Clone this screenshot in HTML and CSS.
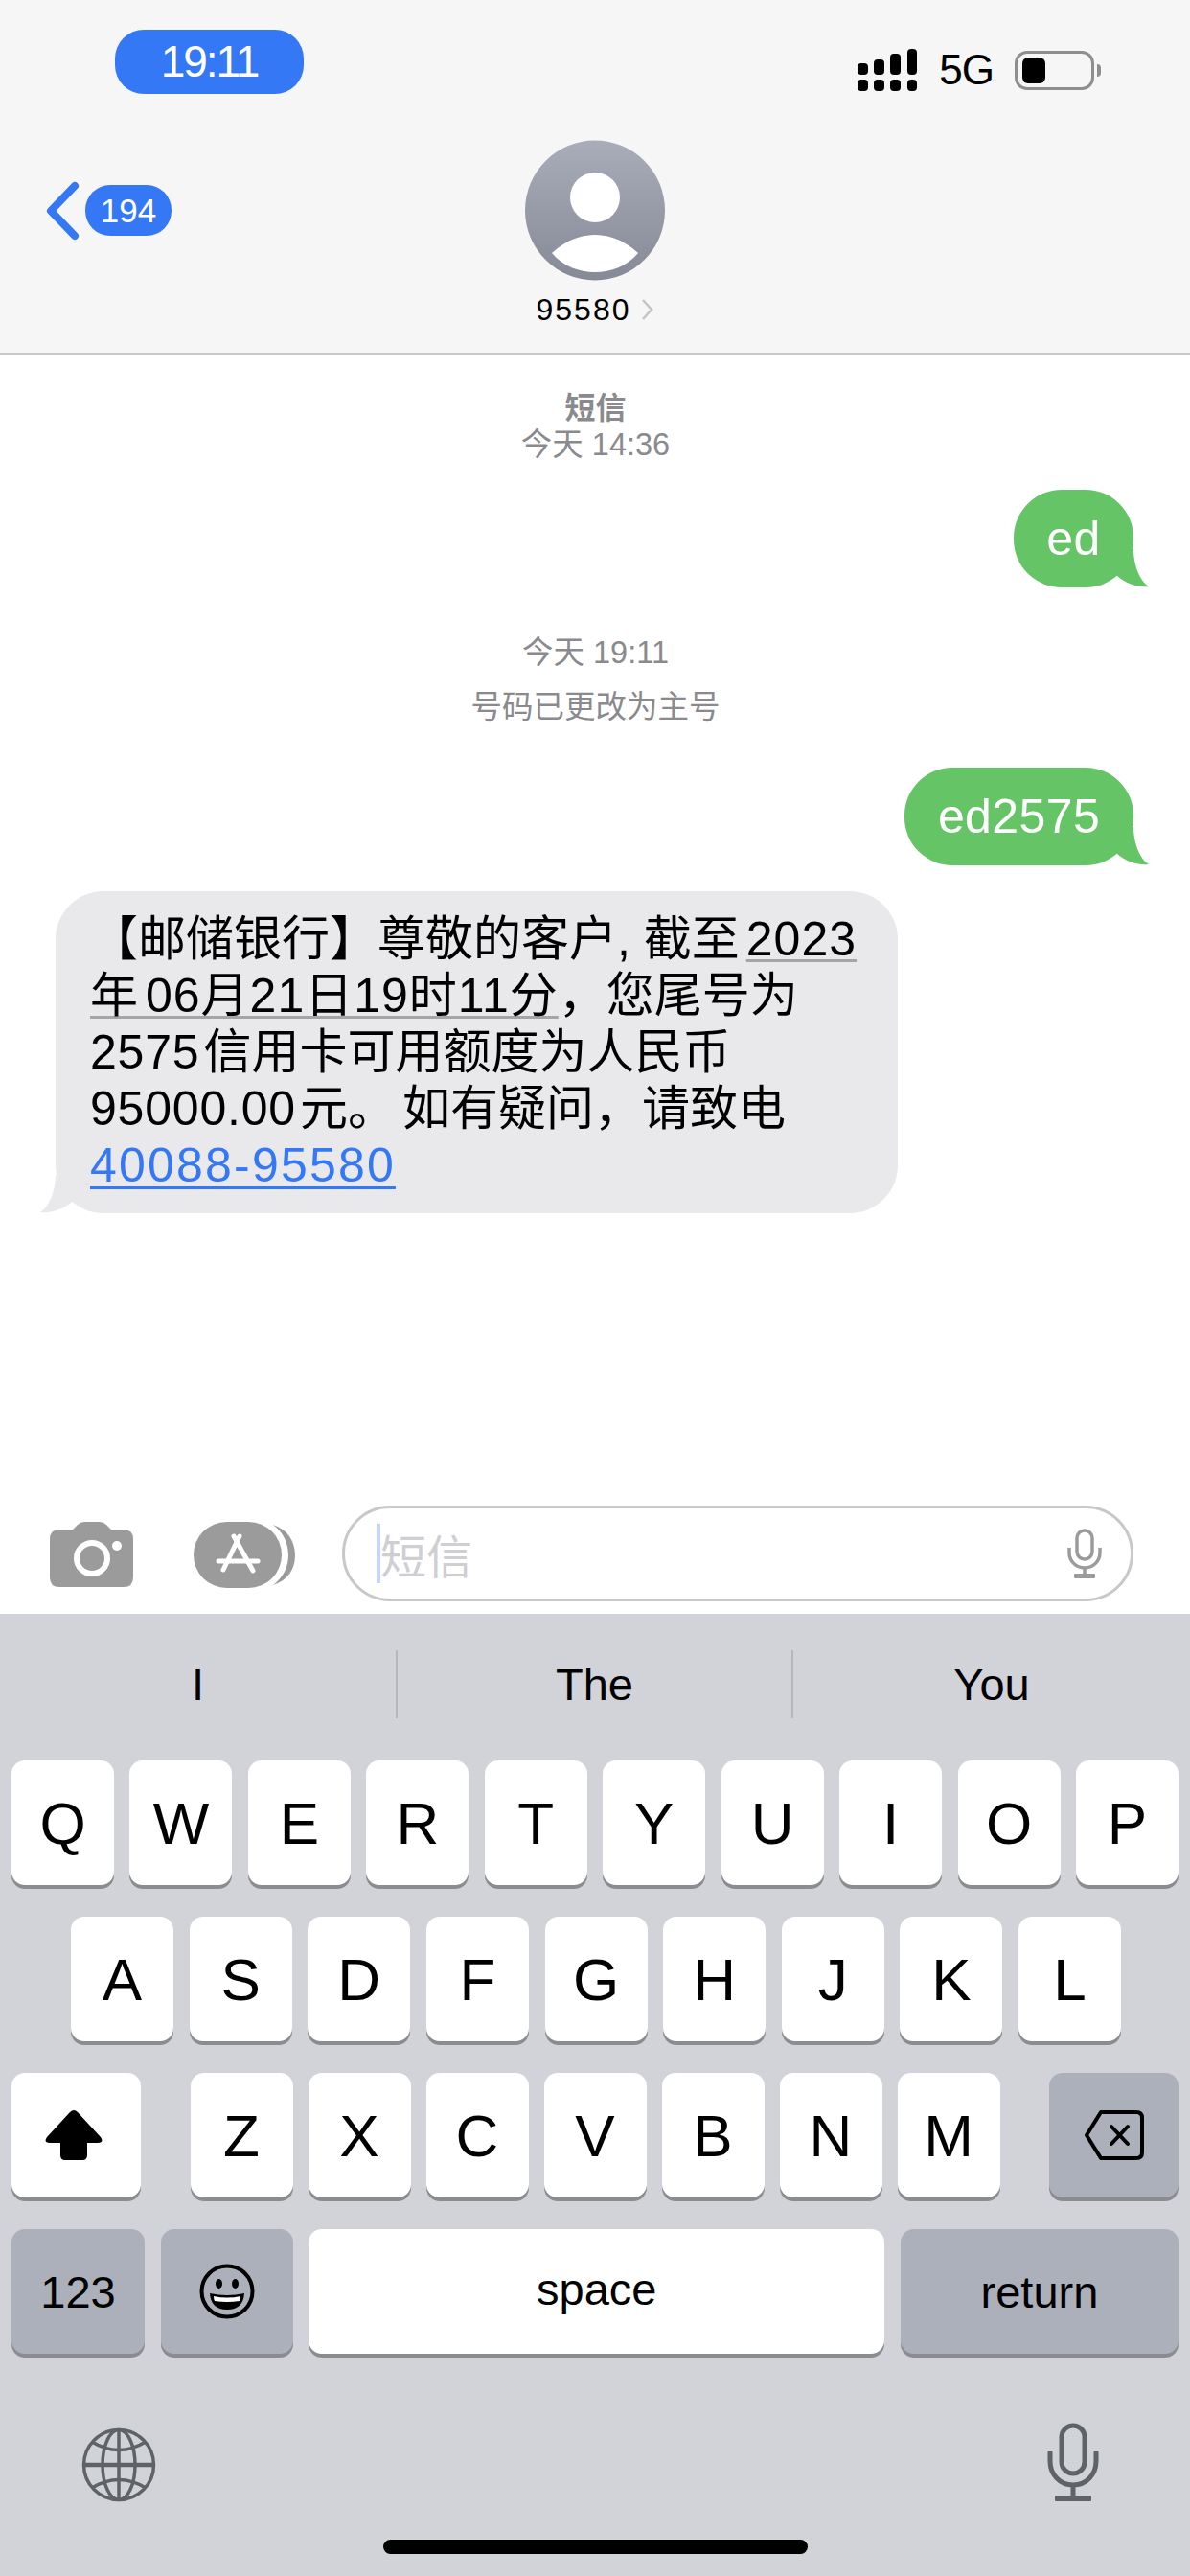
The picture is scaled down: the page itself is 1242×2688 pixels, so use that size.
FILE: index.html
```html
<!DOCTYPE html>
<html lang="zh-CN">

<head>
    <meta charset="UTF-8">
    <title>95580</title>
    <link rel="stylesheet" href="styles.css">
</head>

<body>
    <div class="phone">
        <header class="nav">
            <div class="status">
                <div class="time">19:11</div>
                <div class="status-right">
                    <svg class="signal" width="62" height="44" viewBox="0 0 62 44">
                        <rect x="0" y="15" width="11" height="12" rx="4" />
                        <rect x="17" y="11" width="11" height="16" rx="4" />
                        <rect x="34" y="5" width="11" height="22" rx="4" />
                        <rect x="52" y="0" width="10" height="27" rx="4" />
                        <rect x="0" y="32" width="11" height="12" rx="4" />
                        <rect x="17" y="32" width="11" height="12" rx="4" />
                        <rect x="34" y="32" width="11" height="12" rx="4" />
                        <rect x="52" y="32" width="10" height="12" rx="4" />
                    </svg>
                    <span class="net">5G</span>
                    <div class="battery">
                        <div class="battery-fill"></div>
                    </div>
                    <div class="battery-nub"></div>
                </div>
            </div>
            <div class="contact-row">
                <div class="back">
                    <svg width="36" height="62" viewBox="0 0 36 62">
                        <path d="M31 5 L6 31 L31 57" fill="none" stroke="#3478f6" stroke-width="8" stroke-linecap="round" stroke-linejoin="round" />
                    </svg>
                    <span class="badge">194</span>
                </div>
                <div class="contact">
                    <svg class="avatar" width="146" height="147" viewBox="0 0 146 147">
                        <defs>
                            <linearGradient id="avatarBg" x1="0" y1="0" x2="0" y2="1">
                                <stop offset="0" stop-color="#a9adb9" />
                                <stop offset="1" stop-color="#858a96" />
                            </linearGradient>
                        </defs>
                        <circle cx="73" cy="73.5" r="73" fill="url(#avatarBg)" />
                        <circle cx="73" cy="60" r="26" fill="#fff" />
                        <path d="M28 118 C42 105 58 99 73 99 C88 99 104 105 118 118 C106 132 90 138 73 138 C56 138 40 132 28 118 Z" fill="#fff" />
                    </svg>
                    <div class="contact-name">
                        <span>95580</span>
                        <svg width="13" height="22" viewBox="0 0 13 22">
                            <path d="M2 1 L11 11 L2 21" fill="none" stroke="#c4c4c6" stroke-width="2.5" />
                        </svg>
                    </div>
                </div>
            </div>
        </header>

        <main class="thread">
            <div class="meta meta-first">
                <div class="meta-title">短信</div>
                <div>今天 14:36</div>
            </div>
            <div class="bubble sent sent-first">
                ed
                <svg class="tail" width="60" height="50" viewBox="0 0 60 50">
                    <path d="M40 5 C40 20 46 38 56 44 C46 45 33 42 23 33 L10 10 Z" fill="#65c466" />
                </svg>
            </div>
            <div class="meta meta-second">
                <div>今天 19:11</div>
                <div class="meta-note">号码已更改为主号</div>
            </div>
            <div class="bubble sent sent-second">
                ed2575
                <svg class="tail" width="60" height="50" viewBox="0 0 60 50">
                    <path d="M40 5 C40 20 46 38 56 44 C46 45 33 42 23 33 L10 10 Z" fill="#65c466" />
                </svg>
            </div>
            <div class="bubble received">
                【邮储银行】尊敬的客户, 截至<span class="gap-wide"></span><span class="date-link">2023</span><br>
                <span class="date-link"><span class="year-char">年</span>06月21日19时11分</span>，您尾号为<br>
                <span class="num">2575</span><span class="gap"></span>信用卡可用额度为人民币<br>
                <span class="num">95000.00</span><span class="gap"></span>元。<span class="gap-wide"></span>如有疑问，请致电<br>
                <span class="phone-link">40088-95580</span>
                <svg class="tail" width="60" height="50" viewBox="0 0 60 50">
                    <path d="M40 5 C40 20 46 38 56 44 C46 45 33 42 23 33 L10 10 Z" fill="#e9e9eb" />
                </svg>
            </div>
        </main>

        <section class="composer">
            <svg class="camera" width="87" height="68" viewBox="0 0 87 68">
                <path fill="#9b9b9b" d="M10 8 H24 L29 3 Q32 0 36 0 H52 Q56 0 59 3 L64 8 H77 Q87 8 87 18 V58 Q87 68 77 68 H10 Q0 68 0 58 V18 Q0 8 10 8 Z" />
                <circle cx="44" cy="38" r="16" fill="none" stroke="#fff" stroke-width="6" />
                <circle cx="70" cy="25" r="5" fill="#fff" />
            </svg>
            <svg class="apps" width="106" height="69" viewBox="0 0 106 69">
                <rect width="92" height="69" rx="34.5" fill="#9b9b9b" />
                <path fill="#9b9b9b" d="M83 3 C98 8 106 20 106 35 C106 50 98 61 83 66 C94 58 99 46 99 35 C99 23 94 11 83 3 Z" />
                <g fill="none" stroke="#fff" stroke-width="5" stroke-linecap="round">
                    <path d="M48 15 L31 50" />
                    <path d="M42 15 L62 51" />
                    <path d="M26 41 H67" />
                </g>
            </svg>
            <div class="input">
                <span class="caret"></span>
                <span class="placeholder">短信</span>
                <svg class="input-mic" width="36" height="52" viewBox="0 0 36 52">
                    <g fill="none" stroke="#9b9b9b" stroke-width="3.5">
                        <rect x="10" y="2" width="16" height="30" rx="8" />
                        <path d="M2 20 V25 C2 34 9 41 18 41 C27 41 34 34 34 25 V20" />
                        <path d="M18 41 V50" />
                    </g>
                    <rect x="7" y="47" width="22" height="5" rx="1" fill="#9b9b9b" />
                </svg>
            </div>
        </section>

        <section class="keyboard">
            <div class="suggestions">
                <div class="suggestion">I</div>
                <div class="suggestion suggestion-sep">The</div>
                <div class="suggestion suggestion-sep">You</div>
            </div>

            <div class="key-row">
                <div class="key">Q</div>
                <div class="key">W</div>
                <div class="key">E</div>
                <div class="key">R</div>
                <div class="key">T</div>
                <div class="key">Y</div>
                <div class="key">U</div>
                <div class="key">I</div>
                <div class="key">O</div>
                <div class="key">P</div>
            </div>
            <div class="key-row key-row-inset">
                <div class="key">A</div>
                <div class="key">S</div>
                <div class="key">D</div>
                <div class="key">F</div>
                <div class="key">G</div>
                <div class="key">H</div>
                <div class="key">J</div>
                <div class="key">K</div>
                <div class="key">L</div>
            </div>
            <div class="key-row">
                <div class="key key-side">
                    <svg class="shift" width="60" height="52" viewBox="0 0 60 52">
                        <path d="M30 0 Q32 0 34 2 L58 28 Q62 34 55 34 H44 V47 Q44 52 39 52 H21 Q16 52 16 47 V34 H5 Q-2 34 2 28 L26 2 Q28 0 30 0 Z" />
                    </svg>
                </div>
                <div class="key-group">
                    <div class="key">Z</div>
                    <div class="key">X</div>
                    <div class="key">C</div>
                    <div class="key">V</div>
                    <div class="key">B</div>
                    <div class="key">N</div>
                    <div class="key">M</div>
                </div>
                <div class="key key-side key-dark">
                    <svg width="62" height="52" viewBox="0 0 62 52">
                        <path d="M17 2 H54 Q60 2 60 8 V44 Q60 50 54 50 H17 L2 26 Z" fill="none" stroke="#000" stroke-width="4" stroke-linejoin="round" />
                        <path d="M28 17 L45 35 M45 17 L28 35" fill="none" stroke="#000" stroke-width="4" stroke-linecap="round" />
                    </svg>
                </div>
            </div>
            <div class="key-row">
                <div class="key key-dark key-small key-num">123</div>
                <div class="key key-dark key-emoji">
                    <svg width="58" height="58" viewBox="0 0 58 58">
                        <circle cx="29" cy="29" r="26.5" fill="none" stroke="#000" stroke-width="4" />
                        <ellipse cx="20.5" cy="21" rx="3.5" ry="5" />
                        <ellipse cx="37.5" cy="21" rx="3.5" ry="5" />
                        <path d="M11 31 Q29 35 47 31 Q46 48 29 48 Q12 48 11 31 Z" />
                        <path d="M15 34 Q29 37 43 34 Q43 38 42 39 Q29 41 16 39 Q15 38 15 34 Z" fill="#fff" />
                    </svg>
                </div>
                <div class="key key-small key-space">space</div>
                <div class="key key-dark key-small key-return">return</div>
            </div>

            <div class="kb-bottom">
                <svg class="globe" width="78" height="78" viewBox="0 0 78 78">
                    <g fill="none" stroke="#5f6267" stroke-width="3.5">
                        <circle cx="39" cy="39" r="36.5" />
                        <ellipse cx="39" cy="39" rx="17" ry="36.5" />
                        <path d="M39 2 V76" />
                        <path d="M2 39 H76" stroke-width="4.5" />
                        <path d="M11 15 Q39 32 67 15" />
                        <path d="M11 63 Q39 46 67 63" />
                    </g>
                </svg>
                <svg width="54" height="82" viewBox="0 0 54 82">
                    <g fill="none" stroke="#5f6267" stroke-width="5">
                        <rect x="15" y="3" width="24" height="50" rx="12" />
                        <path d="M3 30 V40 C3 54 13 65 27 65 C41 65 51 54 51 40 V30" />
                        <path d="M27 65 V78" />
                    </g>
                    <rect x="8" y="76" width="38" height="6" rx="1" fill="#5f6267" />
                </svg>
            </div>
            <div class="home-bar"></div>
        </section>
    </div>
</body>

</html>
```

FILE: styles.css
```css
* {
    box-sizing: border-box;
}

body {
    margin: 0;
    background-color: #fff;
    font-family: "Liberation Sans", "Noto Sans CJK SC", sans-serif;
    color: #000;
}

.phone {
    width: 1242px;
    height: 2688px;
    display: flex;
    flex-direction: column;
    overflow: hidden;
}

/* top bar */
.nav {
    height: 370px;
    flex: none;
    background-color: #f6f6f6;
    border-bottom: 2px solid #c9c9c9;
}

.status {
    height: 146px;
    padding: 31px 93px 0 120px;
    display: flex;
    justify-content: space-between;
    align-items: flex-start;
}

.time {
    width: 197px;
    height: 67px;
    line-height: 67px;
    border-radius: 30px;
    background-color: #3478f6;
    color: #fff;
    font-size: 46px;
    letter-spacing: -2px;
    text-align: center;
}

.status-right {
    margin-top: 20px;
    display: flex;
    align-items: center;
}

.net {
    margin-left: 23px;
    font-size: 44px;
    line-height: 44px;
    letter-spacing: -1px;
}

.battery {
    margin-left: 22px;
    width: 83px;
    height: 41px;
    padding: 4px 5px;
    border: 3px solid #8e8e8e;
    border-radius: 13px;
}

.battery-fill {
    width: 24px;
    height: 100%;
    background-color: #000;
    border-radius: 6px;
}

.battery-nub {
    margin-left: 3px;
    width: 4px;
    height: 13px;
    background-color: #8e8e8e;
    border-radius: 0 4px 4px 0;
}

.contact-row {
    display: grid;
    grid-template-columns: 1fr 146px 1fr;
}

.back {
    height: 147px;
    padding-left: 47px;
    display: flex;
    align-items: center;
    gap: 6px;
}

.badge {
    width: 90px;
    height: 53px;
    line-height: 53px;
    border-radius: 26px;
    background-color: #3478f6;
    color: #fff;
    font-size: 35px;
    text-align: center;
}

.contact {
    display: flex;
    flex-direction: column;
    align-items: center;
}

.avatar {
    flex: none;
}

.contact-name {
    margin-top: 11px;
    display: flex;
    align-items: center;
    gap: 11px;
    font-size: 32px;
    line-height: 38px;
    letter-spacing: 2px;
    white-space: nowrap;
}

/* messages */
.thread {
    flex: 1;
    padding: 37px 59px 0 58px;
    display: flex;
    flex-direction: column;
}

.meta {
    font-size: 32.5px;
    line-height: 38px;
    color: #8a8a8e;
    text-align: center;
    margin-right: -2px;
}

.meta-title {
    font-weight: bold;
    font-size: 32px;
}

.meta-second {
    margin-top: 49px;
}

.meta-note {
    margin-top: 19px;
}

.bubble {
    position: relative;
    font-size: 50px;
    line-height: 59px;
    white-space: nowrap;
    border-radius: 50px;
}

.sent {
    align-self: flex-end;
    height: 102px;
    line-height: 102px;
    background-color: #65c466;
    color: #fff;
    text-align: center;
    letter-spacing: 0.4px;
}

.sent .tail {
    position: absolute;
    right: -20px;
    bottom: -5px;
}

.sent-first {
    margin-top: 28px;
    width: 125px;
}

.sent-second {
    margin-top: 44px;
    width: 239px;
}

.received {
    margin-top: 27px;
    width: 879px;
    height: 336px;
    padding: 21px 20px 20px 36px;
    background-color: #e9e9eb;
}

.received .tail {
    position: absolute;
    left: -20px;
    bottom: -5px;
    transform: scaleX(-1);
}

.gap {
    display: inline-block;
    width: 4px;
}

.gap-wide {
    display: inline-block;
    width: 7px;
}

.num {
    letter-spacing: 0.8px;
}

.date-link {
    letter-spacing: 1px;
    text-decoration: underline;
    text-decoration-color: #a5a5a7;
    text-decoration-thickness: 3px;
    text-underline-offset: 4px;
    text-decoration-skip-ink: none;
}

.year-char {
    letter-spacing: 8px;
}

.phone-link {
    color: #3478f6;
    letter-spacing: 2.2px;
    text-decoration: underline;
    text-decoration-thickness: 3px;
    text-underline-offset: 5px;
    text-decoration-skip-ink: none;
}

/* input row */
.composer {
    flex: none;
    height: 124px;
    padding: 11px 57px 0 52px;
    display: flex;
    align-items: flex-start;
}

.camera {
    margin-top: 17px;
    flex: none;
}

.apps {
    margin-top: 17px;
    margin-left: 63px;
    flex: none;
}

.input {
    margin-left: 49px;
    width: 826px;
    height: 100px;
    padding: 0 30px 0 33px;
    display: flex;
    align-items: center;
    border: 3px solid #c8c8c8;
    border-radius: 50px;
}

.caret {
    width: 4px;
    height: 62px;
    background-color: #c9d4fb;
    flex: none;
}

.placeholder {
    flex: 1;
    font-size: 48px;
    color: #cfcfd3;
}

/* keyboard */
.keyboard {
    flex: none;
    height: 1004px;
    padding: 0 12px;
    background-color: #d1d3d9;
}

.suggestions {
    margin: 0 -12px;
    height: 153px;
    padding: 38px 0 44px;
    display: grid;
    grid-template-columns: 413px 413px 416px;
}

.suggestion {
    font-size: 47px;
    line-height: 71px;
    text-align: center;
}

.suggestion-sep {
    border-left: 2px solid #b5b7bd;
}

.key-row {
    height: 130px;
    margin-bottom: 33px;
    display: flex;
    justify-content: space-between;
}

.key-row-inset {
    padding: 0 60px 0 62px;
}

.key {
    width: 107px;
    height: 130px;
    display: flex;
    align-items: center;
    justify-content: center;
    background-color: #fff;
    border-radius: 14px;
    box-shadow: 0 4px 0 #8b8c90;
    font-size: 62px;
}

.key-group {
    width: 845px;
    display: flex;
    justify-content: space-between;
}

.key-side {
    width: 135px;
}

.shift {
    margin-right: 5px;
}

.key-dark {
    background-color: #abb0bb;
}

.key-small {
    font-size: 47px;
}

.key-num {
    width: 139px;
}

.key-emoji {
    width: 138px;
}

.key-space {
    width: 601px;
    padding-bottom: 6px;
}

.key-return {
    width: 290px;
}

.kb-bottom {
    margin-top: 70px;
    height: 84px;
    padding: 2px 83px 0 73px;
    display: flex;
    justify-content: space-between;
    align-items: flex-start;
}

.globe {
    margin-top: 5px;
}

.home-bar {
    width: 443px;
    height: 15px;
    margin: 40px auto 0;
    background-color: #000;
    border-radius: 8px;
}
```
